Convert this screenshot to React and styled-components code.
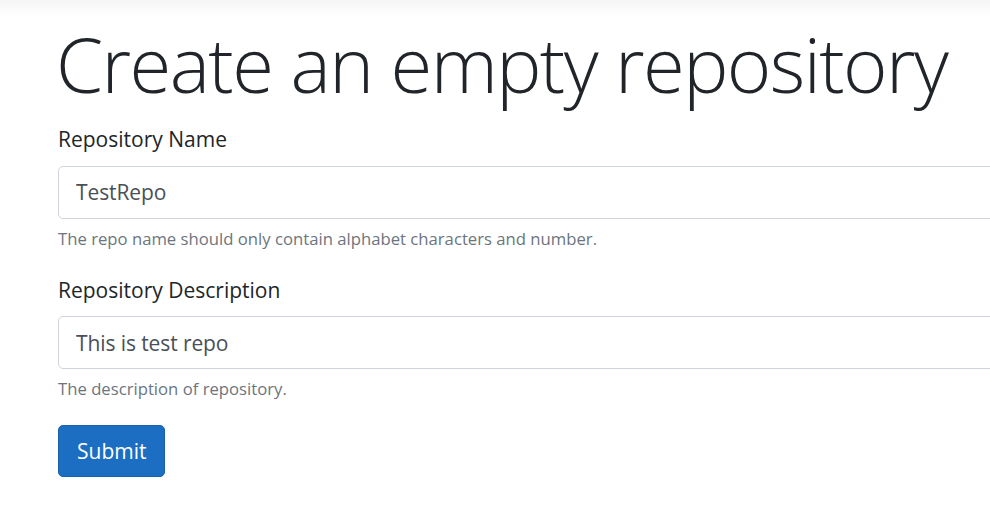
import React from "react";
import styled, { createGlobalStyle } from "styled-components";

const GlobalStyle = createGlobalStyle`
  html, body {
    margin: 0;
    padding: 0;
    background: #fff;
    overflow: hidden;
  }
  body {
    font-family: "Open Sans", "Noto Sans", sans-serif;
    color: #212529;
  }
`;

const App = () => {
  const [name, setName] = React.useState("TestRepo");
  const [desc, setDesc] = React.useState("This is test repo");

  return (
    <>
      <GlobalStyle />
      <TopShade />
      <Page>
        <Title>Create an empty repository</Title>
        <FormGroup>
          <Label htmlFor="repoName">Repository Name</Label>
          <Input id="repoName" value={name} onChange={(e) => setName(e.target.value)} />
          <Help>The repo name should only contain alphabet characters and number.</Help>
        </FormGroup>
        <FormGroup>
          <Label htmlFor="repoDesc">Repository Description</Label>
          <Input id="repoDesc" value={desc} onChange={(e) => setDesc(e.target.value)} />
          <Help>The description of repository.</Help>
        </FormGroup>
        <SubmitButton type="button">Submit</SubmitButton>
      </Page>
    </>
  );
};

const TopShade = styled.div`
  height: 16px;
  background: linear-gradient(#f5f5f5, #fff);
  margin-bottom: -16px;
`;

const Page = styled.div`
  width: 1200px;
  padding: 18px 0 0 58px;
  box-sizing: border-box;
`;

const Title = styled.h1`
  font-size: 76px;
  font-weight: 300;
  line-height: 1.2;
  margin: 0 0 15px -2px;
  letter-spacing: -1.6px;
`;

const FormGroup = styled.div`
  margin-bottom: 24px;
`;

const Label = styled.label`
  display: block;
  font-size: 21px;
  line-height: 1.5;
  margin-bottom: 10px;
`;

const Input = styled.input`
  display: block;
  width: 100%;
  height: 53px;
  box-sizing: border-box;
  padding: 0 17px;
  font-family: inherit;
  font-size: 21px;
  color: #495057;
  border: 1px solid #ced4da;
  border-radius: 5px;
  outline: none;
  letter-spacing: -0.1px;
`;

const Help = styled.small`
  display: block;
  margin-top: 7px;
  font-size: 16.7px;
  line-height: 1.5;
  color: #6c757d;
`;

const SubmitButton = styled.button`
  display: block;
  height: 52px;
  padding: 0 18px;
  font-family: inherit;
  font-size: 21px;
  color: #fff;
  background: #1b6ec2;
  border: 1px solid #1861ac;
  border-radius: 5px;
`;

export default App;
